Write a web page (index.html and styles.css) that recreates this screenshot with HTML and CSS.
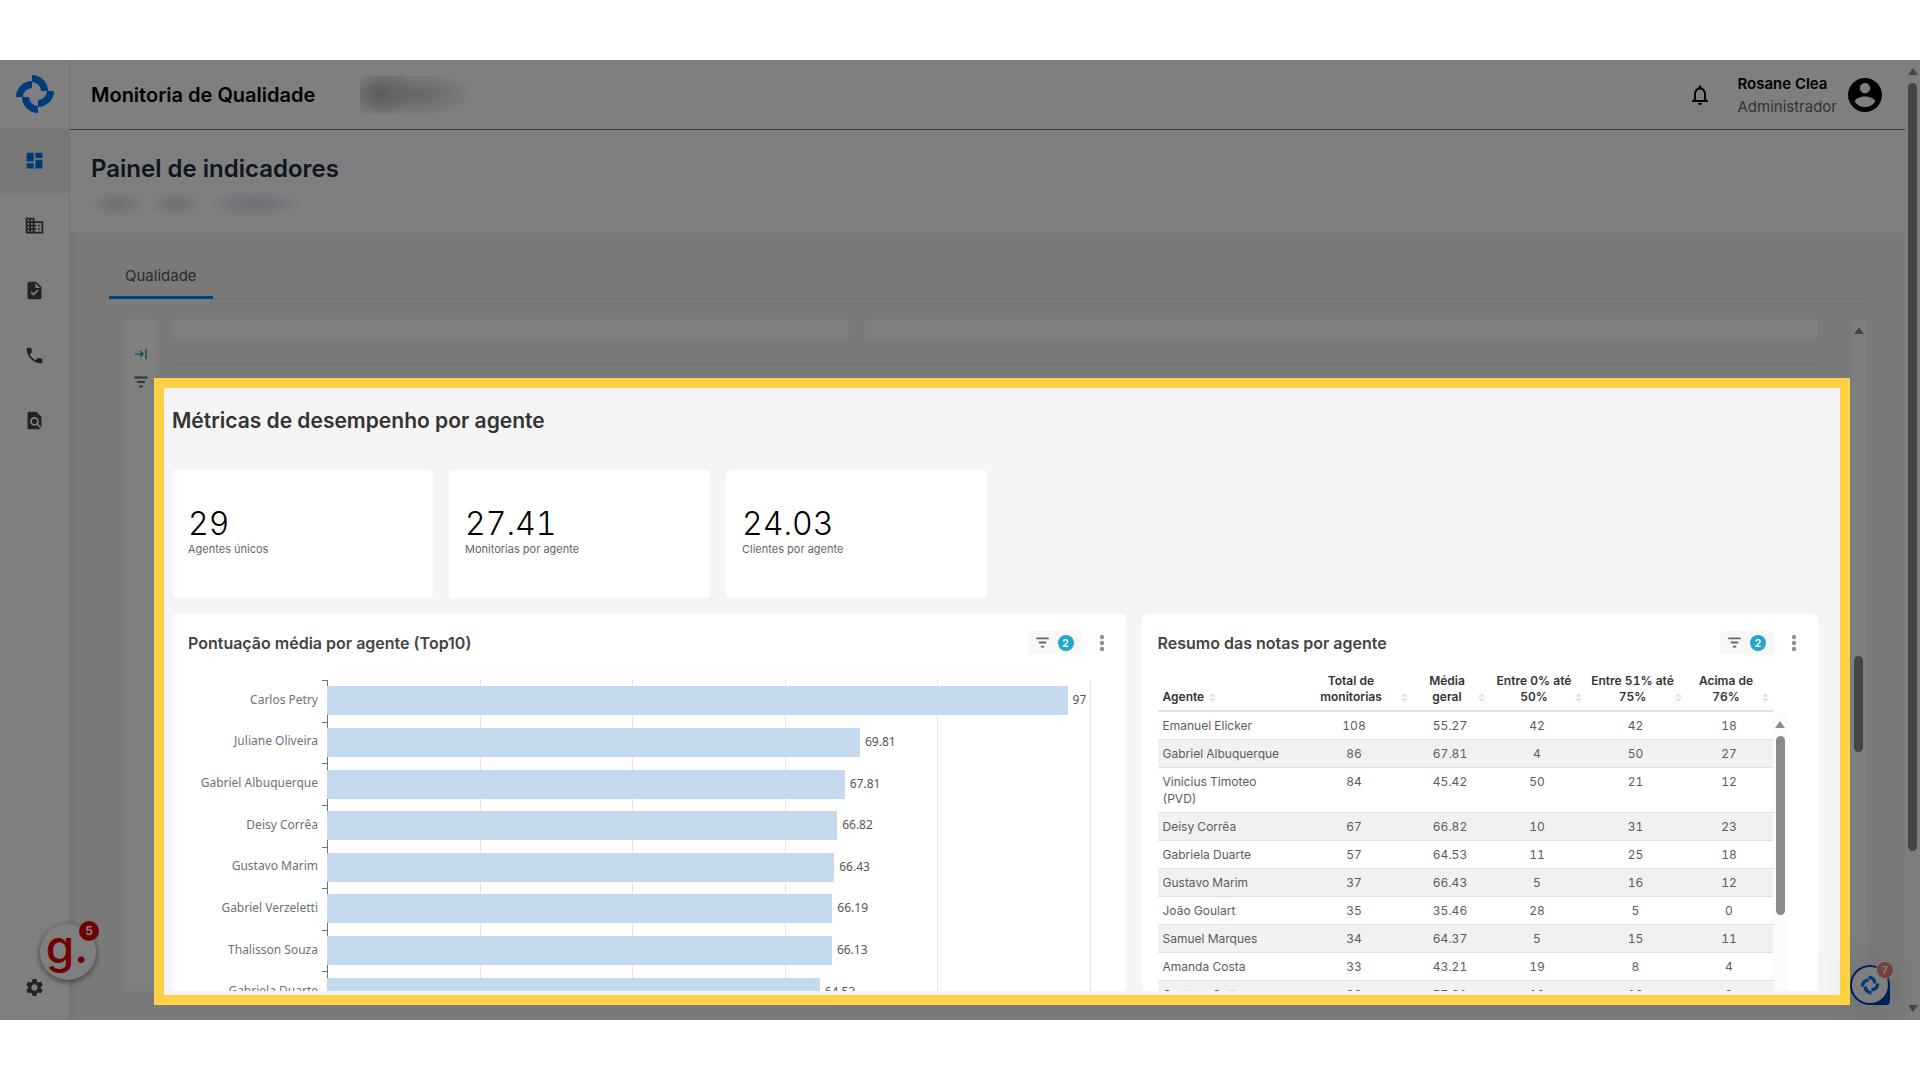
FILE: index.html
```
<!DOCTYPE html>
<html lang="pt-BR">
<head>
  <meta charset="UTF-8">
  <meta name="viewport" content="width=device-width, initial-scale=1.0">
  <title>Monitoria de Qualidade</title>
  <link rel="stylesheet" href="styles.css">
</head>
<body>
  <svg class="sprite" aria-hidden="true">
    <symbol id="logo" viewBox="0 0 40 40">
      <path d="M17 1A16 16 0 0 1 33 17H26A9 9 0 0 0 17 8Z"/>
      <path d="M39 17A16 16 0 0 1 23 33V26A9 9 0 0 0 32 17Z"/>
      <path d="M23 39A16 16 0 0 1 7 23H14A9 9 0 0 0 23 32Z"/>
      <path d="M1 23A16 16 0 0 1 17 7V14A9 9 0 0 0 8 23Z"/>
    </symbol>
    <symbol id="filter" viewBox="0 0 14 12">
      <path d="M1 1.5H13M3.8 6H10.2M6 10.5H8" fill="none" stroke="currentColor" stroke-width="2" stroke-linecap="round"/>
    </symbol>
    <symbol id="dots" viewBox="0 0 6 18">
      <circle cx="3" cy="3" r="2.2"/><circle cx="3" cy="9" r="2.2"/><circle cx="3" cy="15" r="2.2"/>
    </symbol>
    <symbol id="sort" viewBox="0 0 8 10">
      <path d="M4 0L8 4H0ZM4 10L0 6H8Z"/>
    </symbol>
  </svg>

  <div class="app">
    <nav class="sidebar">
      <a class="logo" href="#" aria-label="Início"><svg><use href="#logo"/></svg></a>
      <a class="nav-item active" href="#" aria-label="Painel">
        <svg viewBox="0 0 24 24"><path d="M3 13h8V3H3v10zm0 8h8v-6H3v6zm10 0h8V11h-8v10zm0-18v6h8V3h-8z"/></svg>
      </a>
      <a class="nav-item" href="#" aria-label="Empresas">
        <svg viewBox="0 0 24 24"><path d="M12 7V3H2v18h20V7H12zM6 19H4v-2h2v2zm0-4H4v-2h2v2zm0-4H4V9h2v2zm0-4H4V5h2v2zm4 12H8v-2h2v2zm0-4H8v-2h2v2zm0-4H8V9h2v2zm0-4H8V5h2v2zm10 12h-8v-2h2v-2h-2v-2h2v-2h-2V9h8v10zm-2-8h-2v2h2v-2zm0 4h-2v2h2v-2z"/></svg>
      </a>
      <a class="nav-item" href="#" aria-label="Formulários">
        <svg viewBox="0 0 24 24"><path d="M14 2H6c-1.100 0-2 .9-2 2v16c0 1.100.9 2 2 2h12c1.100 0 2-.9 2-2V8l-6-6zm-3.060 16L7.400 14.460l1.410-1.410 2.120 2.120 4.240-4.240 1.410 1.410L10.940 18zM13 9V3.500L18.500 9H13z"/></svg>
      </a>
      <a class="nav-item" href="#" aria-label="Chamadas">
        <svg viewBox="0 0 24 24"><path d="M20 15.500c-1.250 0-2.450-.2-3.570-.57-.35-.11-.74-.03-1.020.24l-2.200 2.200c-2.830-1.440-5.150-3.750-6.590-6.590l2.200-2.210c.28-.26.36-.65.25-1C8.700 6.450 8.500 5.250 8.500 4c0-.55-.45-1-1-1H4c-.55 0-1 .45-1 1 0 9.390 7.610 17 17 17 .55 0 1-.45 1-1v-3.500c0-.55-.45-1-1-1z"/></svg>
      </a>
      <a class="nav-item" href="#" aria-label="Relatórios">
        <svg viewBox="0 0 24 24"><path d="M20 19.590V8l-6-6H6c-1.100 0-1.990.9-1.990 2L4 20c0 1.100.89 2 1.990 2H18c.45 0 .85-.15 1.190-.4l-4.430-4.430c-.8.52-1.740.83-2.760.83-2.760 0-5-2.240-5-5s2.240-5 5-5 5 2.240 5 5c0 1.020-.31 1.960-.83 2.750L20 19.590zM9 13c0 1.660 1.340 3 3 3s3-1.340 3-3-1.340-3-3-3-3 1.340-3 3z"/></svg>
      </a>
      <a class="nav-item bottom" href="#" aria-label="Configurações">
        <svg viewBox="0 0 24 24"><path d="M19.140 12.940c.04-.3.06-.61.06-.94 0-.32-.02-.64-.07-.94l2.030-1.580c.18-.14.23-.41.12-.61l-1.920-3.320c-.12-.22-.37-.29-.59-.22l-2.390.96c-.5-.38-1.030-.7-1.620-.94L14.400 2.810c-.04-.24-.24-.41-.48-.41h-3.840c-.24 0-.43.17-.47.41L9.250 5.350c-.59.24-1.130.57-1.620.94l-2.390-.96c-.22-.08-.47 0-.59.22L2.740 8.870c-.12.21-.08.47.12.61l2.030 1.580c-.05.3-.09.63-.09.94s.02.640.07.940l-2.030 1.580c-.18.140-.23.410-.12.610l1.920 3.320c.12.220.37.290.59.220l2.390-.96c.5.380 1.030.7 1.620.94l.36 2.540c.05.240.24.410.48.410h3.840c.24 0 .44-.17.47-.41l.36-2.540c.59-.24 1.130-.56 1.620-.94l2.390.96c.22.080.47 0 .59-.22l1.920-3.320c.12-.22.070-.47-.12-.61l-2.010-1.580zM12 15.600c-1.980 0-3.600-1.620-3.600-3.600s1.620-3.600 3.600-3.600 3.600 1.620 3.600 3.600-1.620 3.600-3.600 3.600z"/></svg>
      </a>
    </nav>

    <div class="main">
      <header class="topbar">
        <span class="product">Monitoria de Qualidade</span>
        <span class="client-mask"></span>
        <button class="icon-button" aria-label="Notificações">
          <svg viewBox="0 0 24 24"><path d="M12 22c1.100 0 2-.9 2-2h-4c0 1.100.9 2 2 2zm6-6v-5c0-3.070-1.630-5.640-4.500-6.320V4c0-.83-.67-1.500-1.500-1.500s-1.500.67-1.500 1.500v.68C7.640 5.360 6 7.920 6 11v5l-2 2v1h16v-1l-2-2zm-2 1H8v-6c0-2.480 1.510-4.500 4-4.500s4 2.020 4 4.500v6z"/></svg>
        </button>
        <div class="user">
          <strong>Rosane Clea</strong>
          <span>Administrador</span>
        </div>
        <svg class="avatar" viewBox="2 2 20 20"><path d="M12 2C6.480 2 2 6.480 2 12s4.480 10 10 10 10-4.480 10-10S17.520 2 12 2zm0 3c1.660 0 3 1.340 3 3s-1.340 3-3 3-3-1.340-3-3 1.340-3 3-3zm0 14.200c-2.500 0-4.710-1.280-6-3.220.03-1.990 4-3.080 6-3.080 1.990 0 5.970 1.090 6 3.080-1.290 1.940-3.500 3.220-6 3.220z"/></svg>
      </header>

      <div class="page-title">
        <h1>Painel de indicadores</h1>
        <div class="crumbs-mask"><i></i><i></i><i></i></div>
      </div>

      <div class="content">
        <div class="tabs"><a class="tab" href="#">Qualidade</a></div>

        <div class="dashboard">
          <div class="filter-strip">
            <svg class="expand" viewBox="0 0 14 12"><path d="M1 6H9M6 3L9 6L6 9M12 1V11" fill="none" stroke="currentColor" stroke-width="1.500"/></svg>
            <svg class="funnel"><use href="#filter"/></svg>
          </div>

          <div class="board">
            <div class="row peek">
              <div class="card span-5"></div>
              <div class="card span-7"></div>
            </div>
            <hr>
            <h2>Métricas de desempenho por agente</h2>

            <div class="row">
              <div class="card kpi"><b>29</b><span>Agentes únicos</span></div>
              <div class="card kpi"><b>27.41</b><span>Monitorias por agente</span></div>
              <div class="card kpi"><b>24.03</b><span>Clientes por agente</span></div>
            </div>

            <div class="row charts">
              <section class="card panel span-7">
                <div class="panel-head">
                  <h3>Pontuação média por agente (Top10)</h3>
                  <button class="filters"><svg><use href="#filter"/></svg><em>2</em></button>
                  <button class="more" aria-label="Mais opções"><svg><use href="#dots"/></svg></button>
                </div>
                <div class="chart">
                  <div class="names">
                    <span>Carlos Petry</span>
                    <span>Juliane Oliveira</span>
                    <span>Gabriel Albuquerque</span>
                    <span>Deisy Corrêa</span>
                    <span>Gustavo Marim</span>
                    <span>Gabriel Verzeletti</span>
                    <span>Thalisson Souza</span>
                    <span>Gabriela Duarte</span>
                  </div>
                  <div class="plot">
                    <div class="grid-lines"><i></i><i></i><i></i><i></i><i></i></div>
                    <div class="bar-row"><div class="bar" style="width: 97%"></div><span>97</span></div>
                    <div class="bar-row"><div class="bar" style="width: 69.81%"></div><span>69.81</span></div>
                    <div class="bar-row"><div class="bar" style="width: 67.81%"></div><span>67.81</span></div>
                    <div class="bar-row"><div class="bar" style="width: 66.82%"></div><span>66.82</span></div>
                    <div class="bar-row"><div class="bar" style="width: 66.43%"></div><span>66.43</span></div>
                    <div class="bar-row"><div class="bar" style="width: 66.19%"></div><span>66.19</span></div>
                    <div class="bar-row"><div class="bar" style="width: 66.13%"></div><span>66.13</span></div>
                    <div class="bar-row"><div class="bar" style="width: 64.53%"></div><span>64.53</span></div>
                  </div>
                </div>
              </section>

              <section class="card panel span-5">
                <div class="panel-head">
                  <h3>Resumo das notas por agente</h3>
                  <button class="filters"><svg><use href="#filter"/></svg><em>2</em></button>
                  <button class="more" aria-label="Mais opções"><svg><use href="#dots"/></svg></button>
                </div>
                <div class="table-area">
                  <table>
                    <colgroup>
                      <col class="c-agent"><col class="c-total"><col class="c-avg"><col class="c-low"><col class="c-mid"><col class="c-high">
                    </colgroup>
                    <thead>
                      <tr>
                        <th><div>Agente<svg><use href="#sort"/></svg></div></th>
                        <th><div><span>Total de monitorias</span><svg><use href="#sort"/></svg></div></th>
                        <th><div><span>Média geral</span><svg><use href="#sort"/></svg></div></th>
                        <th><div><span>Entre 0% até 50%</span><svg><use href="#sort"/></svg></div></th>
                        <th><div><span>Entre 51% até 75%</span><svg><use href="#sort"/></svg></div></th>
                        <th><div><span>Acima de 76%</span><svg><use href="#sort"/></svg></div></th>
                      </tr>
                    </thead>
                    <tbody>
                      <tr><td>Emanuel Elicker</td><td>108</td><td>55.27</td><td>42</td><td>42</td><td>18</td></tr>
                      <tr><td>Gabriel Albuquerque</td><td>86</td><td>67.81</td><td>4</td><td>50</td><td>27</td></tr>
                      <tr><td>Vinicius Timoteo<br>(PVD)</td><td>84</td><td>45.42</td><td>50</td><td>21</td><td>12</td></tr>
                      <tr><td>Deisy Corrêa</td><td>67</td><td>66.82</td><td>10</td><td>31</td><td>23</td></tr>
                      <tr><td>Gabriela Duarte</td><td>57</td><td>64.53</td><td>11</td><td>25</td><td>18</td></tr>
                      <tr><td>Gustavo Marim</td><td>37</td><td>66.43</td><td>5</td><td>16</td><td>12</td></tr>
                      <tr><td>João Goulart</td><td>35</td><td>35.46</td><td>28</td><td>5</td><td>0</td></tr>
                      <tr><td>Samuel Marques</td><td>34</td><td>64.37</td><td>5</td><td>15</td><td>11</td></tr>
                      <tr><td>Amanda Costa</td><td>33</td><td>43.21</td><td>19</td><td>8</td><td>4</td></tr>
                      <tr><td>Gustavo Gattze</td><td>32</td><td>57.91</td><td>10</td><td>10</td><td>9</td></tr>
                    </tbody>
                  </table>
                  <div class="scrollbar table-scroll"><i class="up"></i><i class="thumb"></i></div>
                </div>
              </section>
            </div>
          </div>
          <div class="scrollbar board-scroll"><i class="up"></i><i class="thumb"></i></div>
          <div class="spotlight"></div>
        </div>
      </div>
    </div>

    <div class="scrollbar page-scroll"><i class="up"></i><i class="thumb"></i><i class="down"></i></div>

    <button class="g-bubble" aria-label="Mensagens">g.<em>5</em></button>
    <button class="chat-bubble" aria-label="Chat"><span><svg><use href="#logo"/></svg></span><em>7</em></button>
  </div>
</body>
</html>
```

FILE: styles.css
```
* {
  box-sizing: border-box;
}
body {
  margin: 0;
  padding: 60px 0;
  height: 100vh;
  background: #fff;
  font-family: Inter, "Liberation Sans", sans-serif;
  color: #333;
}
h1, h2, h3 {
  margin: 0;
  font-weight: 600;
}
a {
  color: inherit;
  text-decoration: none;
}
button {
  border: none;
  padding: 0;
  background: none;
  font-family: inherit;
  cursor: pointer;
}
em, i {
  font-style: normal;
}
svg {
  display: block;
  fill: currentColor;
}
.sprite {
  position: absolute;
  width: 0;
  height: 0;
}
.app {
  position: relative;
  display: flex;
  height: 100%;
  overflow: hidden;
  background: #f5f5f5;
}

/* Sidebar */
.sidebar {
  display: flex;
  flex-direction: column;
  width: 70px;
  background: #fff;
  color: #444;
  border-right: 1px solid #e4e4e4;
  box-shadow: 0 0 10px rgba(0, 0, 0, 0.1);
}
.logo {
  display: flex;
  align-items: center;
  justify-content: center;
  height: 68px;
  color: #0078f8;
}
.logo svg {
  width: 40px;
  height: 40px;
}
.nav-item {
  display: flex;
  align-items: center;
  justify-content: center;
  height: 65px;
}
.nav-item svg {
  width: 21px;
  height: 21px;
}
.nav-item.active {
  background: #f0f0f0;
  color: #0070f0;
}
.nav-item.bottom {
  margin-top: auto;
}

/* Header */
.main {
  flex: 1;
  min-width: 0;
  display: flex;
  flex-direction: column;
}
.topbar {
  display: flex;
  align-items: center;
  height: 70px;
  padding: 0 23px 0 21px;
  background: #fff;
  border-bottom: 1px solid #777;
  color: #000;
}
.product {
  font-size: 20px;
  font-weight: 600;
  line-height: 24px;
}
.client-mask {
  width: 110px;
  height: 38px;
  margin: 0 auto 0 45px;
  background: radial-gradient(ellipse 34px 26px at 20px 18px, #b5b8b5, transparent),
    radial-gradient(ellipse 60px 24px at 55px 18px, #ccc, transparent);
}
.icon-button svg {
  width: 24px;
  height: 24px;
}
.user {
  display: flex;
  flex-direction: column;
  margin: 0 11px 0 25px;
  font-size: 15px;
  line-height: 23px;
}
.user strong {
  font-weight: 600;
}
.user span {
  color: #666;
}
.avatar {
  width: 34px;
  height: 34px;
}
.page-title {
  height: 103px;
  padding: 23px 21px;
  background: #fff;
}
h1 {
  font-size: 24px;
  line-height: 32px;
  color: #1b2a41;
}
.crumbs-mask {
  display: flex;
  gap: 4px;
  margin-top: 5px;
}
.crumbs-mask i {
  width: 54px;
  height: 28px;
  background: radial-gradient(closest-side, #dcdcdc, transparent);
}
.crumbs-mask i:last-child {
  width: 96px;
  background: radial-gradient(closest-side, #d8def2, transparent);
}

/* Tabs and dashboard frame */
.content {
  flex: 1;
  min-height: 0;
  display: flex;
  flex-direction: column;
  padding: 22px 39px 29px;
}
.tabs {
  display: flex;
  margin-bottom: 20px;
  border-bottom: 1px solid #e4e4e4;
}
.tab {
  height: 44px;
  margin-bottom: -1px;
  padding: 0 16px;
  border-bottom: 3px solid #0084ff;
  color: #555;
  font-size: 15px;
  line-height: 42px;
}
.dashboard {
  position: relative;
  flex: 1;
  min-height: 0;
  display: flex;
  margin-left: 15px;
}
.filter-strip {
  width: 33px;
  padding-top: 29px;
  background: #fff;
  color: #666;
}
.filter-strip svg {
  width: 14px;
  height: 12px;
  margin: 0 auto 16px;
}
.filter-strip .expand {
  color: #20a7c9;
}
.board {
  flex: 1;
  min-width: 0;
  display: flex;
  flex-direction: column;
  padding: 0 33px 0 15px;
  overflow: hidden;
}

/* Highlighted area, everything round it is dimmed */
.spotlight {
  position: absolute;
  inset: 59px 16px -14px 30px;
  border: 10px solid #ffd145;
  box-shadow: 0 0 0 2000px rgba(0, 0, 0, 0.5);
  pointer-events: none;
  z-index: 10;
}

/* Cards */
.row {
  display: grid;
  grid-template-columns: repeat(12, 1fr);
  gap: 16px;
  flex: none;
}
.card {
  grid-column: span 2;
  background: #fff;
  border-radius: 4px;
}
.span-5 {
  grid-column: span 5;
}
.span-7 {
  grid-column: span 7;
}
.peek {
  height: 20px;
}
hr {
  width: 100%;
  margin: 24px 0 0;
  border: none;
  border-top: 1px solid #e0e0e0;
}
h2 {
  margin: 43px 0 35px;
  font-size: 21px;
  line-height: 28px;
}
.kpi {
  height: 128px;
  padding: 36px 16px 0;
}
.kpi b {
  display: block;
  color: #000;
  font-size: 32px;
  font-weight: 300;
  line-height: 36px;
  font-feature-settings: "tnum";
}
.kpi span {
  display: block;
  color: #666;
  font-size: 11px;
  line-height: 15px;
}
.charts {
  flex: 1;
  min-height: 0;
  margin-top: 16px;
}
.panel {
  min-height: 0;
  padding: 16px 15px 0 16px;
  overflow: hidden;
}
.panel-head {
  display: flex;
  align-items: center;
  height: 25px;
}
h3 {
  margin-right: auto;
  color: #444;
  font-size: 16px;
}
.filters {
  display: flex;
  align-items: center;
  gap: 9px;
  height: 24px;
  padding: 0 8px;
  border-radius: 4px;
  background: #f7f7f7;
  color: #666;
}
.filters svg {
  width: 13px;
  height: 11px;
}
.filters em {
  width: 16px;
  height: 16px;
  border-radius: 50%;
  background: #20a7c9;
  color: #fff;
  font-size: 11px;
  font-weight: 600;
  line-height: 16px;
}
.more {
  margin-left: 11px;
  padding: 0 6px;
  color: #879399;
}
.more svg {
  width: 6px;
  height: 18px;
}

/* Bar chart */
.chart {
  display: flex;
  height: 333px;
  margin: 25px 20px 0 0;
  font-family: "Noto Sans", sans-serif;
  font-size: 12px;
}
.names {
  display: flex;
  flex-direction: column;
  width: 139px;
  color: #6e7079;
  text-align: right;
}
.names span {
  flex: 1;
  display: flex;
  align-items: center;
  justify-content: flex-end;
  padding: 0 9px 3px 0;
  background: linear-gradient(#6e7079, #6e7079) top right / 5px 1px no-repeat;
}
.plot {
  position: relative;
  flex: 1;
  display: flex;
  flex-direction: column;
  border-left: 1px solid #6e7079;
}
.grid-lines {
  position: absolute;
  inset: 0;
  display: flex;
}
.grid-lines i {
  flex: 1;
  border-right: 1px solid #e0e6f1;
}
.bar-row {
  position: relative;
  flex: 1;
  display: flex;
  align-items: center;
  margin-left: -1px;
  color: #555;
}
.bar {
  height: 29px;
  margin-right: 5px;
  background: #c6daef;
}
.bar-row span {
  padding-bottom: 2px;
}

/* Summary table */
.table-area {
  display: flex;
  margin: 18px 16px 0 0;
}
table {
  flex: 1;
  width: 100%;
  table-layout: fixed;
  border-collapse: separate;
  border-spacing: 0;
  color: #5c5c5c;
  font-size: 12px;
  line-height: 17px;
  font-feature-settings: "tnum";
}
.c-agent { width: 139px; }
.c-total { width: 115px; }
.c-avg { width: 77px; }
.c-low { width: 97px; }
.c-mid { width: 100px; }
.c-high { width: 87px; }
th {
  padding: 0 4px 5px 5px;
  border-bottom: 2px solid #e0e0e0;
  color: #333;
  font-weight: 600;
  line-height: 16px;
  vertical-align: bottom;
}
th div {
  display: flex;
  align-items: flex-end;
}
th span {
  flex: 1;
}
th svg {
  flex: none;
  width: 7px;
  height: 9px;
  margin-bottom: 3px;
  color: #e0e0e0;
}
th:first-child svg {
  margin-left: 5px;
}
td {
  padding: 5px;
  border-bottom: 1px solid #e0e0e0;
  text-align: center;
  vertical-align: top;
}
td:first-child {
  text-align: left;
}
tbody tr:nth-child(even) {
  background: #f1f1f1;
}

/* Scrollbars */
.scrollbar {
  flex: none;
  width: 15px;
  display: flex;
  flex-direction: column;
  align-items: center;
  padding: 8px 0;
  background: #fcfcfc;
}
.scrollbar .up {
  border: 5px solid transparent;
  border-top: none;
  border-bottom: 7px solid #8b8b8b;
}
.scrollbar .down {
  margin-top: auto;
  border: 5px solid transparent;
  border-bottom: none;
  border-top: 7px solid #8b8b8b;
}
.scrollbar .thumb {
  width: 9px;
  margin-top: 8px;
  border-radius: 5px;
  background: #8b8b8b;
}
.page-scroll .thumb {
  height: calc(100% - 176px);
}
.board-scroll .thumb {
  height: 96px;
  margin-top: 322px;
}
.table-scroll {
  margin-top: 40px;
}
.table-scroll .thumb {
  height: 179px;
}

/* Floating buttons */
.g-bubble {
  position: absolute;
  left: 40px;
  bottom: 40px;
  width: 56px;
  height: 56px;
  padding-right: 2px;
  border-radius: 50%;
  background: #fff;
  box-shadow: 0 2px 6px rgba(0, 0, 0, 0.5);
  color: #e00008;
  font-size: 46px;
  font-weight: 500;
  line-height: 34px;
  padding-bottom: 12px;
}
.g-bubble em {
  position: absolute;
  top: -3px;
  right: -3px;
  width: 20px;
  height: 20px;
  border-radius: 50%;
  background: #e00008;
  color: #fff;
  font-size: 12px;
  font-weight: 700;
  line-height: 20px;
}
.chat-bubble {
  position: absolute;
  right: 30px;
  bottom: 15px;
  width: 40px;
  height: 40px;
  padding: 2px;
  border-radius: 50% 50% 4px 50%;
  background: #0040b0;
  box-shadow: 0 0 40px rgba(0, 0, 0, 0.15);
}
.chat-bubble span {
  display: flex;
  align-items: center;
  justify-content: center;
  width: 36px;
  height: 36px;
  border-radius: 50%;
  background: #fff;
  color: #007bff;
}
.chat-bubble svg {
  width: 20px;
  height: 20px;
}
.chat-bubble em {
  position: absolute;
  top: -4px;
  right: -4px;
  width: 18px;
  height: 18px;
  border: 1px solid #fff;
  border-radius: 50%;
  background: #f07a7a;
  color: #fff;
  font-size: 10px;
  font-weight: 700;
  line-height: 16px;
}
```
